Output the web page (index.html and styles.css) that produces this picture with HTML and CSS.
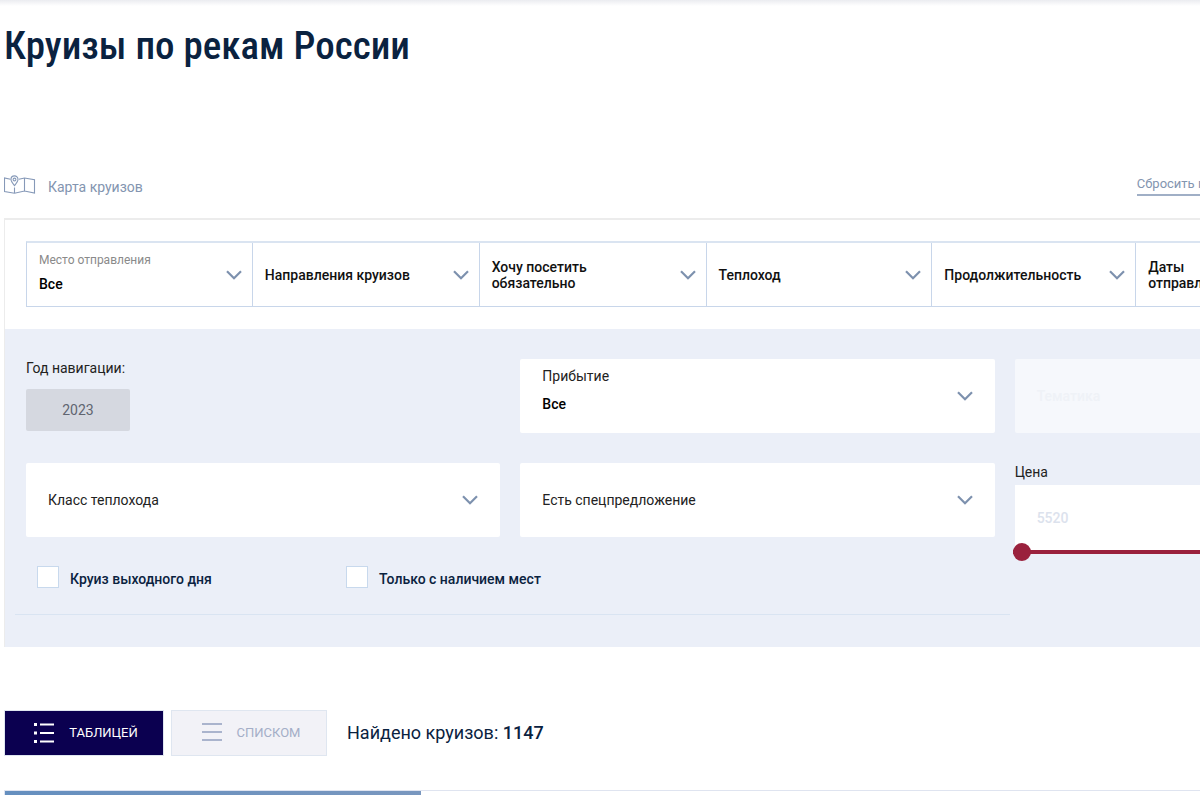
FILE: index.html
```html
<!DOCTYPE html>
<html lang="ru">
<head>
<meta charset="utf-8">
<meta name="viewport" content="width=device-width, initial-scale=1">
<title>Круизы по рекам России</title>
<link rel="stylesheet" href="styles.css">
</head>
<body>
<svg class="sprite" aria-hidden="true">
  <symbol id="chevron" viewBox="0 0 16 10"><path d="M1 1.2 8 8.2 15 1.2" fill="none" stroke="#7d91ae" stroke-width="2.2"/></symbol>
</svg>
<main class="page">
  <div class="content">
    <h1 class="title">Круизы по рекам России</h1>

    <div class="tools">
      <a class="map-link" href="#map">
        <svg class="map-icon" viewBox="1 0 32 20" fill="none" stroke="#8699b8" stroke-width="1.1" aria-hidden="true">
          <path d="M7.500 4.300 1.500 3v13.600l10 1.600 10-2.200 10 2V4.800L21.500 3l-5.600 1.300M11.500 12.500v5.700M21.500 3v13"/>
          <path d="M11.500 10.600C9.500 8 8 6.200 8 4.400a3.500 3.500 0 0 1 7 0C15 6.200 13.500 8 11.500 10.600Z"/>
          <circle cx="11.500" cy="4.500" r="1.400"/>
        </svg>
        <span>Карта круизов</span>
      </a>
      <a class="reset" href="#reset">Сбросить параметры</a>
    </div>

    <form class="filter">
      <div class="main-row">
        <label class="cell cell-value">
          <span class="cell-caption">Место отправления</span>
          <select class="value"><option>Все</option></select>
          <svg class="arrow"><use href="#chevron"/></svg>
        </label>
        <label class="cell"><span class="cell-name">Направления круизов</span><select class="cover"><option></option></select><svg class="arrow"><use href="#chevron"/></svg></label>
        <label class="cell"><span class="cell-name">Хочу посетить<br>обязательно</span><select class="cover"><option></option></select><svg class="arrow"><use href="#chevron"/></svg></label>
        <label class="cell"><span class="cell-name">Теплоход</span><select class="cover"><option></option></select><svg class="arrow"><use href="#chevron"/></svg></label>
        <label class="cell"><span class="cell-name">Продолжительность</span><select class="cover"><option></option></select><svg class="arrow"><use href="#chevron"/></svg></label>
        <label class="cell"><span class="cell-name">Даты<br>отправления</span><select class="cover"><option></option></select><svg class="arrow"><use href="#chevron"/></svg></label>
        <button class="find" type="submit">Найти</button>
      </div>

      <div class="extra">
        <div class="fields">
          <div class="year">
            <span class="label">Год навигации:</span>
            <button class="year-button" type="button">2023</button>
          </div>
          <label class="box box-value">
            <span class="box-caption">Прибытие</span>
            <select class="value"><option>Все</option></select>
            <svg class="arrow"><use href="#chevron"/></svg>
          </label>
          <label class="box box-off"><span>Тематика</span><select class="cover" disabled><option></option></select></label>
          <label class="box"><span>Класс теплохода</span><select class="cover"><option></option></select><svg class="arrow"><use href="#chevron"/></svg></label>
          <label class="box"><span>Есть спецпредложение</span><select class="cover"><option></option></select><svg class="arrow"><use href="#chevron"/></svg></label>
          <div class="price">
            <label class="label" for="price">Цена</label>
            <input class="price-input" id="price" type="text" placeholder="5520">
            <input class="price-range" type="range" min="5520" max="200000" value="5520" aria-label="Цена от">
          </div>
        </div>
        <div class="checks">
          <label class="check"><input type="checkbox"><span>Круиз выходного дня</span></label>
          <label class="check"><input type="checkbox"><span>Только с наличием мест</span></label>
        </div>
      </div>
    </form>

    <div class="results-bar">
      <button class="view view-active" type="button">
        <svg class="view-icon" viewBox="0 0 20 22" fill="#fff" aria-hidden="true"><path d="M0 1h3v3H0zM0 9.500h3v3H0zM0 18h3v3H0zM6 1.500h14v2H6zM6 10h14v2H6zM6 18.500h14v2H6z"/></svg>
        <span>ТАБЛИЦЕЙ</span>
      </button>
      <button class="view" type="button">
        <svg class="view-icon" viewBox="0 0 20 22" fill="#aab4cd" aria-hidden="true"><path d="M0 1h20v2H0zM0 9h20v2H0zM0 17h20v2H0z"/></svg>
        <span>СПИСКОМ</span>
      </button>
      <p class="found">Найдено круизов: <strong>1147</strong></p>
    </div>

    <article class="card"><div class="card-photo"></div></article>
  </div>
</main>
</body>
</html>
```
FILE: styles.css
```css
* { box-sizing: border-box; }

body {
  margin: 0;
  background: #fff;
  color: #222;
  font: 14px/20px Roboto, "Liberation Sans", sans-serif;
}

button, input, select { font: inherit; color: inherit; }
a { color: #8395b0; text-decoration: none; }
.sprite { display: none; }

.page {
  height: 100vh;
  padding-left: 4px;
  overflow: hidden;
  background: linear-gradient(#ebecf0, #fff 6px);
}

.content {
  display: flex;
  flex-direction: column;
  width: 126%;
  height: 100%;
}

.title {
  margin: 0;
  padding-top: 16px;
  color: #0a2240;
  font: 500 39px/60px "Roboto Condensed", Roboto, sans-serif;
}

.tools {
  display: flex;
  justify-content: space-between;
  margin-top: 98px;
  padding-right: 244px;
  height: 44px;
}

.map-link { display: flex; gap: 12px; height: 24px; }
.map-link span { padding-top: 3px; }
.map-icon { width: 32px; height: 20px; margin-top: 1px; }

.reset {
  height: 22px;
  border-bottom: 2px solid #a0afc6;
  font-size: 13px;
}

.filter { border: 1px solid #ececec; border-top-width: 2px; border-bottom: 0; }

.main-row {
  display: grid;
  grid-template-columns: 226fr 227fr 227fr 226fr 204fr 204fr 148fr;
  height: 66px;
  margin: 21px 21px 22px;
  border: 1px solid #c8d6ea;
  border-top: 2px solid #dae4f1;
}

.cell {
  display: grid;
  grid-template-columns: 1fr 16px;
  align-items: center;
  padding: 0 10px 0 12px;
  border-right: 1px solid #c8d6ea;
}

.cell-name { grid-area: 1 / 1; color: #111; font-weight: 500; line-height: 16px; }
.cell-caption { grid-area: 1 / 1; color: #8a8a8a; font-size: 12px; }
.cell-value { grid-template-rows: 34px 14px 15px; }

.arrow { grid-column: 2; grid-row: 1 / -1; align-self: center; width: 16px; height: 10px; pointer-events: none; }

.value {
  grid-area: 2 / 1;
  appearance: none;
  padding: 0;
  border: 0;
  background: none;
  color: #000;
  font-weight: 500;
}

.cover {
  grid-area: 1 / 1 / 2 / 3;
  appearance: none;
  width: 100%;
  height: 100%;
  border: 0;
  background: none;
}

.find { border: 0; background: #9a213d; color: #fff; }

.extra { padding: 30px 21px 32px; background: #ebeff8; }

.fields {
  display: grid;
  grid-template-columns: repeat(3, 1fr);
  grid-auto-rows: 74px;
  gap: 30px 20px;
}

.label { display: block; line-height: 18px; }
.year-button {
  width: 104px;
  height: 42px;
  margin-top: 12px;
  border: 0;
  border-radius: 2px;
  background: #d5d8e0;
  color: #606570;
}

.box {
  display: grid;
  grid-template-columns: 1fr 16px;
  align-items: center;
  padding: 0 22px;
  border-radius: 2px;
  background: #fff;
}

.box span { grid-area: 1 / 1; }
.box-value { grid-template-rows: 34px 22px 18px; }
.box-off { background: #f6f8fc; color: #eff2f7; font-weight: 500; }

.price { display: flex; flex-direction: column; }
.price-input {
  flex: none;
  height: 66px;
  margin-top: 4px;
  padding: 0 22px;
  border: 0;
  border-radius: 0;
  background: #fff;
}
.price-input::placeholder { color: #dce2ed; font-weight: 500; opacity: 1; }

.price-range {
  z-index: 1;
  flex: none;
  appearance: none;
  width: 100%;
  height: 18px;
  margin: -8px 0 0 -2px;
  background: linear-gradient(#9a213d, #9a213d) center / 100% 4px no-repeat;
}
.price-range::-webkit-slider-thumb {
  appearance: none;
  width: 18px;
  height: 18px;
  border-radius: 50%;
  background: #9a213d;
}

.checks {
  display: flex;
  width: 68%;
  height: 78px;
  margin-left: -11px;
  padding: 29px 22px 0;
  border-bottom: 1px solid #d9e4f2;
}

.check {
  display: flex;
  gap: 11px;
  width: 309px;
  color: #0a2240;
  font-weight: 500;
}
.check span { padding-top: 3px; }
.check input {
  appearance: none;
  width: 22px;
  height: 22px;
  margin: 0;
  border: 1px solid #c8d9ed;
  background: #fff;
}

.results-bar { display: flex; align-items: center; margin-top: 63px; }

.view {
  display: flex;
  align-items: center;
  justify-content: center;
  gap: 15px;
  width: 156px;
  height: 46px;
  margin-right: 7px;
  padding: 0 6px 0 10px;
  border: 1px solid #dfe6f0;
  background: #f2f2f7;
  color: #a4aec7;
  font-size: 13px;
}
.view-active { width: 160px; background: #0b0050; color: #fff; }
.view-icon { width: 20px; height: 22px; }

.found { margin: 0 0 0 13px; color: #0a2240; font-size: 18px; }
.found strong { font-weight: 500; }

.card {
  flex: 1;
  margin-top: 34px;
  border: solid #dfe4f0;
  border-width: 1px 1px 0;
}
.card-photo { width: 416px; height: 100%; background: linear-gradient(90deg, #658fbf, #7997bf); }
```
